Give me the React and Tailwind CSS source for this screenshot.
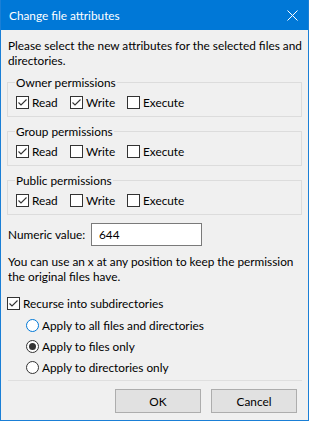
import React from "react";

function Check({ checked }) {
  return (
    <span className="w-[13px] h-[13px] border border-[#333333] bg-white flex items-center justify-center shrink-0">
      {checked && (
        <svg width="11" height="11" viewBox="0 0 11 11">
          <polyline points="1.5,5.5 4,8 9.5,2.5" fill="none" stroke="#333333" strokeWidth="1.1" />
        </svg>
      )}
    </span>
  );
}

function CheckItem({ checked, label, w }) {
  return (
    <div className={`flex items-center gap-[3px] ${w}`}>
      <Check checked={checked} />
      <span>{label}</span>
    </div>
  );
}

function Group({ title, read, write, exec }) {
  return (
    <fieldset className="border border-[#dcdcdc] pl-[8px] pt-[5px] pb-[6px] mt-[7px]">
      <legend className="px-[1px] -ml-[1px] h-[15px] leading-[15px]">{title}</legend>
      <div className="flex items-center h-[15px]">
        <CheckItem checked={read} label="Read" w="w-[54px]" />
        <CheckItem checked={write} label="Write" w="w-[57px]" />
        <CheckItem checked={exec} label="Execute" w="w-[80px]" />
      </div>
    </fieldset>
  );
}

function Radio({ checked, focus, label }) {
  return (
    <div className="flex items-center h-[21px] gap-[3px]">
      <span
        className={`w-[13px] h-[13px] rounded-full border bg-white flex items-center justify-center shrink-0 ${
          focus ? "border-[#0078d7]" : "border-[#333333]"
        }`}
      >
        {checked && <span className="w-[7px] h-[7px] rounded-full bg-[#333333]" />}
      </span>
      <span>{label}</span>
    </div>
  );
}

export default function App() {
  return (
    <div
      className="w-[309px] h-[421px] border border-[#1a7fd6] bg-[#f0f0f0] flex flex-col text-[11.8px] leading-[15px] text-black"
      style={{ fontFamily: "Lato, 'Noto Sans', sans-serif" }}
    >
      <div className="h-[30px] shrink-0 bg-[#0078d7] flex items-center justify-between pl-[8px] pr-[10px] text-white -mt-px">
        <span className="pt-[1px]">Change file attributes</span>
        <svg width="11" height="11" viewBox="0 0 11 11" className="mt-[1px]">
          <path d="M0.5 0.5 L10.5 10.5 M10.5 0.5 L0.5 10.5" stroke="white" strokeWidth="1" fill="none" />
        </svg>
      </div>
      <div className="flex flex-col px-[6px] mt-px">
        <p className="pt-[7px] pl-[1px] whitespace-nowrap">
          Please select the new attributes for the selected files and
          <br />
          directories.
        </p>
        <Group title="Owner permissions" read write={true} exec={false} />
        <Group title="Group permissions" read write={false} exec={false} />
        <Group title="Public permissions" read write={false} exec={false} />
        <div className="flex items-center mt-[8px]">
          <span className="w-[84px] pl-[1px]">Numeric value:</span>
          <div className="w-[111px] h-[23px] border border-[#7a7a7a] bg-white flex items-center pl-[7px]">644</div>
        </div>
        <p className="mt-[8px] pl-[1px] whitespace-nowrap">
          You can use an x at any position to keep the permission
          <br />
          the original files have.
        </p>
        <div className="mt-[12px] flex items-center gap-[3px] h-[15px]">
          <Check checked />
          <span>Recurse into subdirectories</span>
        </div>
        <div className="mt-[4px] pl-[19px] flex flex-col">
          <Radio focus label="Apply to all files and directories" />
          <Radio checked label="Apply to files only" />
          <Radio label="Apply to directories only" />
        </div>
        <div className="mt-[2px] ml-[1px] h-px bg-[#dfdfdf]" />
        <div className="mt-[8px] flex justify-end gap-[10px] pr-[5px]">
          <button className="w-[86px] h-[24px] bg-[#e1e1e1] border border-[#adadad] flex items-center justify-center">OK</button>
          <button className="w-[86px] h-[24px] bg-[#e1e1e1] border border-[#adadad] flex items-center justify-center">Cancel</button>
        </div>
      </div>
    </div>
  );
}
